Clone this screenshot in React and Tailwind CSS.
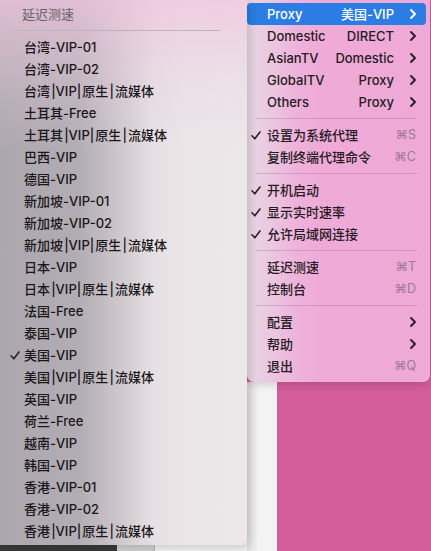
import React from "react";

const FONT = "font-['Inter','Noto_Sans_CJK_SC','DejaVu_Sans',sans-serif]";

function Check({ white }) {
  return (
    <svg width="10" height="9" viewBox="0 0 10 9" className="block">
      <path d="M1 4.8 L3.8 7.8 L9 1" fill="none" stroke={white ? "#fff" : "#2a2228"} strokeWidth="1.6" strokeLinecap="round" strokeLinejoin="round" />
    </svg>
  );
}

function Chevron({ white }) {
  return (
    <svg width="6" height="10" viewBox="0 0 6 10" className="block">
      <path d="M1 1 L5 5 L1 9" fill="none" stroke={white ? "#fff" : "#2a1f27"} strokeWidth="1.9" strokeLinecap="round" strokeLinejoin="round" />
    </svg>
  );
}

const P = "\u200a|VIP|\u200a原生\u200a|\u200a流媒体";

const nodes = [
  "台湾-VIP-01",
  "台湾-VIP-02",
  "台湾" + P,
  "土耳其-Free",
  "土耳其" + P,
  "巴西-VIP",
  "德国-VIP",
  "新加坡-VIP-01",
  "新加坡-VIP-02",
  "新加坡" + P,
  "日本-VIP",
  "日本" + P,
  "法国-Free",
  "泰国-VIP",
  "美国-VIP",
  "美国" + P,
  "英国-VIP",
  "荷兰-Free",
  "越南-VIP",
  "韩国-VIP",
  "香港-VIP-01",
  "香港-VIP-02",
  "香港" + P,
];

function LeftMenu() {
  return (
    <div className="relative z-10 h-[545px] rounded-br-[7px] pt-[3px] shadow-[2px_2px_10px_rgba(0,0,0,0.18)] bg-[linear-gradient(to_bottom,rgba(240,196,224,0.75)_0px,rgba(236,205,225,0.35)_70px,rgba(236,220,230,0)_150px),linear-gradient(to_right,#aca7ae_0%,#b2adb4_32%,#cdc7cc_48%,#e6e0e4_62%,#ebe6e8_75%,#ece7e9_100%)]">
      <div className="h-[22px] flex items-center pl-[22px] text-[#6a6369] font-normal">延迟测速</div>
      <div className="h-[11px] flex items-center px-[13px] mr-[14px]">
        <div className="h-px w-full bg-[#bdb3ba]" />
      </div>
      {nodes.map((n) => (
        <div key={n} className="h-[22px] flex items-center pl-[10px] text-[#1a1619]">
          <div className="w-[14px] flex items-center">{n === "美国-VIP" ? <Check /> : null}</div>
          <span className="whitespace-pre">{n}</span>
        </div>
      ))}
    </div>
  );
}

function Divider() {
  return (
    <div className="h-[11px] flex items-center pl-[9px] pr-[13px]">
      <div className="h-px w-full bg-[rgba(120,60,100,0.22)]" />
    </div>
  );
}

function SubRow({ label, value, active }) {
  return (
    <div className={`h-[22px] flex items-center mr-[4px] rounded-[4px] pl-[20px] pr-[10px] ${active ? "bg-[#2b7de3] text-white" : "text-[#261b23]"}`}>
      <span className="flex-1">{label}</span>
      <span className="mr-[16px]">{value}</span>
      <Chevron white={active} />
    </div>
  );
}

function Row({ label, checked, shortcut, chevron }) {
  return (
    <div className="h-[22px] flex items-center mr-[4px] pl-[4px] pr-[10px] text-[#261b23]">
      <div className="w-[16px] flex items-center">{checked ? <Check /> : null}</div>
      <span className="flex-1">{label}</span>
      {shortcut ? <span className="text-[#9c7a92] text-[12.5px] font-normal">{shortcut}</span> : null}
      {chevron ? <Chevron /> : null}
    </div>
  );
}

function RightMenu() {
  return (
    <div className="relative z-0 h-[382px] mr-px rounded-b-[7px] pt-[3px] shadow-[0_3px_8px_rgba(0,0,0,0.15)] bg-[linear-gradient(to_right,#e7d8e3_0px,#ebc6e0_25px,#eeb2da_50px,#efaad8_75px,#eea9d7_100%)]">
      <SubRow label="Proxy" value="美国-VIP" active />
      <SubRow label="Domestic" value="DIRECT" />
      <SubRow label="AsianTV" value="Domestic" />
      <SubRow label="GlobalTV" value="Proxy" />
      <SubRow label="Others" value="Proxy" />
      <Divider />
      <Row label="设置为系统代理" checked shortcut="⌘S" />
      <Row label="复制终端代理命令" shortcut="⌘C" />
      <Divider />
      <Row label="开机启动" checked />
      <Row label="显示实时速率" checked />
      <Row label="允许局域网连接" checked />
      <Divider />
      <Row label="延迟测速" shortcut="⌘T" />
      <Row label="控制台" shortcut="⌘D" />
      <Divider />
      <Row label="配置" chevron />
      <Row label="帮助" chevron />
      <Row label="退出" shortcut="⌘Q" />
    </div>
  );
}

export default function App() {
  return (
    <div className={`w-[431px] h-[551px] overflow-hidden flex bg-[#d35d9b] text-[13px] leading-none font-medium ${FONT}`}>
      <div className="w-[247px] flex flex-col shrink-0 bg-[#f1f1f1]">
        <LeftMenu />
        <div className="flex-1 flex">
          <div className="w-[117px] bg-[#393939]" />
          <div className="w-[38px] bg-[#cfcfcf] border-r border-[#b9b9b9]" />
          <div className="flex-1 bg-[#f1f1f1]" />
        </div>
      </div>
      <div className="flex-1 flex flex-col">
        <RightMenu />
        <div className="flex-1 flex">
          <div className="w-[30px] bg-[linear-gradient(to_right,#dedede,#f3f3f3_40%,#f4f4f4)]" />
          <div className="flex-1 bg-[#d35d9b]" />
        </div>
      </div>
    </div>
  );
}
